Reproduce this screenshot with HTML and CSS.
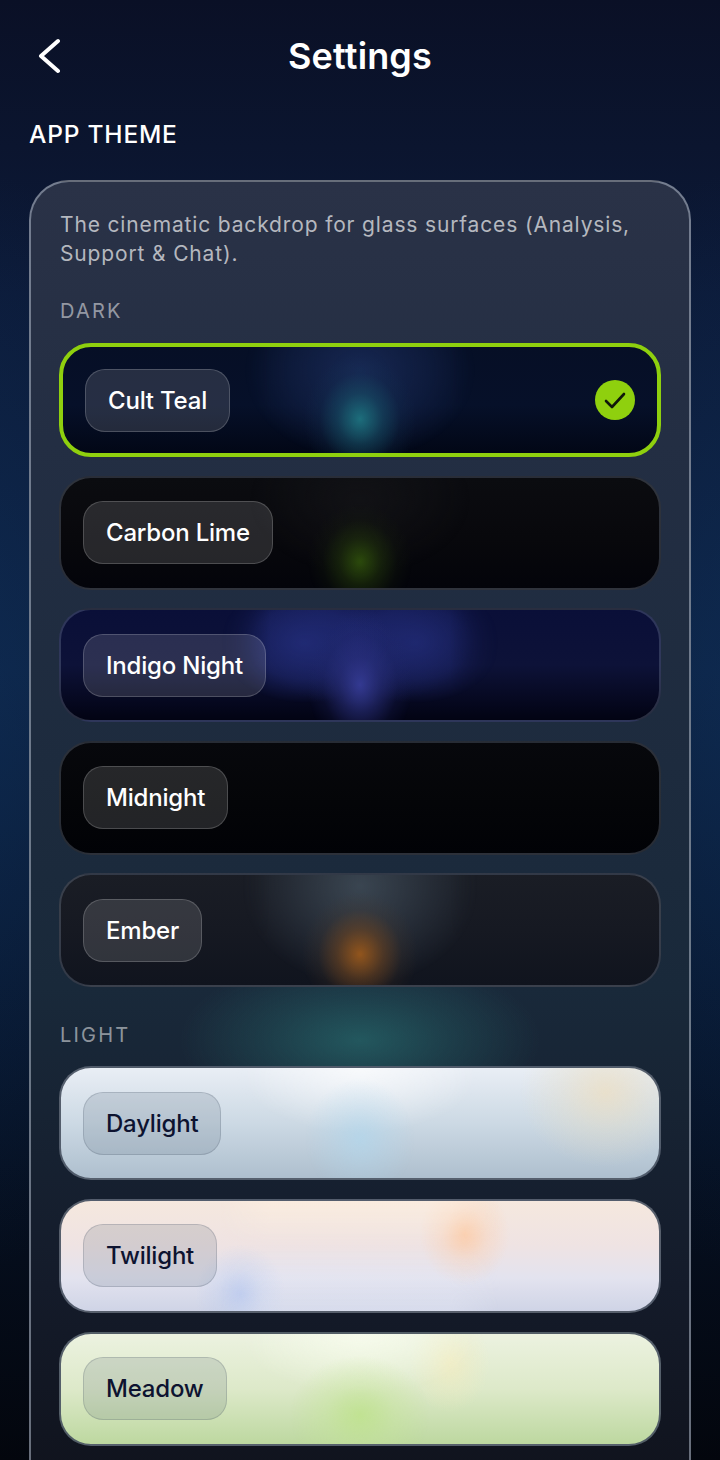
FILE: index.html
```html
<!DOCTYPE html>
<html lang="en">
<head>
<meta charset="utf-8">
<title>Settings</title>
<link rel="stylesheet" href="styles.css">
</head>
<body>
<main class="screen">
  <header class="topbar">
    <button class="back" aria-label="Back">
      <svg viewBox="0 0 24 40" width="24" height="40" fill="none" stroke="#fff" stroke-width="4" stroke-linecap="round" stroke-linejoin="round"><path d="M22 5 L5 20 L22 35"/></svg>
    </button>
    <h1>Settings</h1>
  </header>
  <h2 class="section-title">APP THEME</h2>
  <section class="card">
    <p class="desc">The cinematic backdrop for glass surfaces (Analysis, Support &amp; Chat).</p>
    <h3 class="group first">DARK</h3>
    <div class="list">
      <div class="row selected teal"><span class="band"></span><span class="pill">Cult Teal</span>
        <span class="check"><svg viewBox="0 0 40 40" width="40" height="40" fill="none" stroke="#10180a" stroke-width="2.6" stroke-linecap="round" stroke-linejoin="round"><path d="M11 21 L17 27 L29 14"/></svg></span>
      </div>
      <div class="row carbon"><span class="band"></span><span class="pill">Carbon Lime</span></div>
      <div class="row indigo"><span class="band"></span><span class="pill">Indigo Night</span></div>
      <div class="row midnight"><span class="band"></span><span class="pill">Midnight</span></div>
      <div class="row ember"><span class="band"></span><span class="pill">Ember</span></div>
    </div>
    <h3 class="group">LIGHT</h3>
    <div class="list">
      <div class="row light daylight"><span class="band"></span><span class="pill">Daylight</span></div>
      <div class="row light twilight"><span class="band"></span><span class="pill">Twilight</span></div>
      <div class="row light meadow"><span class="band"></span><span class="pill">Meadow</span></div>
    </div>
  </section>
</main>
</body>
</html>
```

FILE: styles.css
```css
* { box-sizing: border-box; }
html, body { margin: 0; height: 1460px; overflow: hidden; }
body {
  font-family: Inter, "Noto Sans", sans-serif;
  color: #fff;
  background:
    radial-gradient(ellipse 300px 560px at -60px 720px, rgba(18,62,112,.36), transparent 100%),
    radial-gradient(ellipse 300px 560px at 780px 720px, rgba(18,62,112,.36), transparent 100%),
    linear-gradient(180deg, #0a1026 0%, #0c1a38 20%, #0c2040 46%, #07142a 72%, #03060d 100%);
}
.screen { height: 1460px; padding: 0 29px; overflow: hidden; }
.topbar { position: relative; height: 112px; display: flex; align-items: center; justify-content: center; }
.back { position: absolute; left: 7px; top: 36px; padding: 0; border: 0; background: none; line-height: 0; }
.topbar h1 { margin: 0; font-size: 36px; font-weight: 600; line-height: 40px; letter-spacing: .15px; }
.section-title { margin: 6px 0 0; font-size: 24.5px; font-weight: 500; line-height: 32px; letter-spacing: .8px; }
.card {
  margin-top: 30px;
  border: 2px solid rgba(190,200,215,.5);
  border-bottom: 0;
  border-radius: 40px 40px 0 0;
  padding: 28px 28px 40px;
  height: 1300px;
  background:
    radial-gradient(ellipse 180px 85px at 329px 858px, rgba(42,120,120,.6), rgba(42,120,120,.28) 50%, transparent 100%),
    linear-gradient(180deg, #2a3247 0%, #232e43 20%, #1d2b3e 45%, #19293a 62%, #141b2a 85%, #10131d 100%);
}
.desc { margin: 0 0 0 1px; font-size: 21px; line-height: 29px; letter-spacing: .85px; color: rgba(255,255,255,.66); font-weight: 400; }
.group { margin: 0 0 0 1px; font-size: 20px; line-height: 26px; font-weight: 400; letter-spacing: 2.2px; color: rgba(255,255,255,.52); }
.group.first { margin-top: 30px; margin-bottom: 19px; }
.group:not(.first) { margin-top: 35px; margin-bottom: 18px; }
.list { display: flex; flex-direction: column; gap: 18.6px; }
.row {
  position: relative;
  display: flex;
  align-items: center;
  justify-content: space-between;
  height: 114px;
  padding: 0 28px 0 22px;
  border: 2px solid rgba(150,165,190,.26);
  border-radius: 32px;
  overflow: hidden;
}
.row.selected { border: 4px solid #8fd00e; padding-left: 22px; padding-right: 22px; }
.row.light { border-color: rgba(70,80,95,.9); color: #0d1330; }
.band {
  position: absolute;
  top: 0;
  bottom: 0;
  left: 50%;
  width: 280px;
  margin-left: -140px;
  -webkit-mask-image: linear-gradient(90deg, transparent, #000 18%, #000 82%, transparent);
  mask-image: linear-gradient(90deg, transparent, #000 18%, #000 82%, transparent);
}
.pill {
  position: relative;
  height: 63px;
  padding: 0 22px;
  display: flex;
  align-items: center;
  font-size: 24px;
  letter-spacing: -.2px;
  font-weight: 500;
  border-radius: 20px;
  border: 1.5px solid rgba(255,255,255,.18);
  background: rgba(255,255,255,.13);
}
.light .pill { border-color: rgba(60,70,90,.2); background: rgba(70,85,105,.16); }
.check {
  position: relative;
  width: 40px; height: 40px;
  border-radius: 50%;
  background: #8fd00e;
  line-height: 0;
}

/* theme previews */
.teal { background: linear-gradient(180deg, #060f26 0%, #061029 55%, #020716 100%); }
.teal .band {
  background:
    radial-gradient(ellipse 56px 64px at 50% 68%, rgba(32,125,135,.85), rgba(26,95,115,.45) 40%, rgba(20,60,90,.15) 72%, transparent),
    radial-gradient(ellipse 115px 90px at 50% 22%, rgba(26,44,90,.85), rgba(26,44,90,.4) 60%, transparent);
}
.carbon { background: linear-gradient(180deg, #0b0c10 0%, #08080c 55%, #03040a 100%); }
.carbon .band {
  background:
    radial-gradient(ellipse 52px 58px at 50% 76%, rgba(50,85,12,.85), rgba(42,68,12,.42) 40%, rgba(30,45,12,.14) 72%, transparent),
    radial-gradient(ellipse 110px 75px at 50% 20%, rgba(24,24,27,.55), transparent);
}
.indigo { background: linear-gradient(180deg, #0a0f38 0%, #0d1238 50%, #020313 100%); }
.indigo .band {
  background:
    radial-gradient(ellipse 52px 70px at 50% 68%, rgba(54,60,150,.95), rgba(44,50,130,.55) 40%, rgba(34,40,110,.18) 72%, transparent),
    radial-gradient(ellipse 85px 60px at 30% 30%, rgba(34,44,120,.9), rgba(34,44,120,.5) 60%, transparent),
    radial-gradient(ellipse 85px 60px at 70% 30%, rgba(34,44,120,.8), rgba(34,44,120,.42) 60%, transparent),
    radial-gradient(ellipse 115px 70px at 50% 24%, rgba(30,38,108,.7), transparent);
}
.midnight { background: linear-gradient(180deg, #07080c 0%, #040508 55%, #010206 100%); }
.ember { background: linear-gradient(180deg, #1a1d25 0%, #161922 50%, #10141e 100%); }
.ember .band {
  background:
    radial-gradient(ellipse 58px 62px at 50% 72%, rgba(152,88,28,.95), rgba(120,72,30,.52) 40%, rgba(80,56,36,.16) 72%, transparent),
    radial-gradient(ellipse 118px 100px at 50% 10%, rgba(62,74,86,.9), rgba(52,62,74,.45) 62%, transparent);
}
.daylight {
  background:
    radial-gradient(ellipse 85px 75px at 91% 22%, rgba(238,222,190,.7), rgba(232,222,196,.35) 50%, transparent),
    linear-gradient(180deg, #e9eef5 0%, #ccd9e4 50%, #aebfce 100%);
}
.daylight .band {
  background:
    radial-gradient(ellipse 55px 60px at 50% 64%, rgba(176,214,236,.7), rgba(176,214,236,.3) 50%, transparent),
    radial-gradient(ellipse 125px 65px at 50% 0%, rgba(255,255,255,.7), transparent);
}
.twilight {
  background:
    radial-gradient(ellipse 45px 52px at 67.5% 30%, rgba(253,200,160,.8), rgba(253,205,170,.35) 50%, transparent),
    radial-gradient(ellipse 45px 50px at 30% 85%, rgba(184,200,238,.85), rgba(190,205,238,.35) 50%, transparent),
    linear-gradient(180deg, #f5e8de 0%, #efe3e3 40%, #e3e3ef 70%, #cfd4e6 100%);
}
.twilight .band { background: linear-gradient(180deg, rgba(255,240,225,.5), transparent 40%, rgba(235,238,250,.3)); }
.meadow {
  background:
    radial-gradient(ellipse 40px 50px at 65% 26%, rgba(244,236,190,.7), rgba(244,236,190,.3) 50%, transparent),
    linear-gradient(180deg, #ecf2e0 0%, #dde9c9 50%, #bdd8a0 100%);
}
.meadow .band {
  background:
    radial-gradient(ellipse 70px 60px at 50% 74%, rgba(190,226,140,.85), rgba(195,228,150,.4) 50%, transparent),
    radial-gradient(ellipse 125px 60px at 50% 0%, rgba(250,254,240,.75), transparent);
}
```
